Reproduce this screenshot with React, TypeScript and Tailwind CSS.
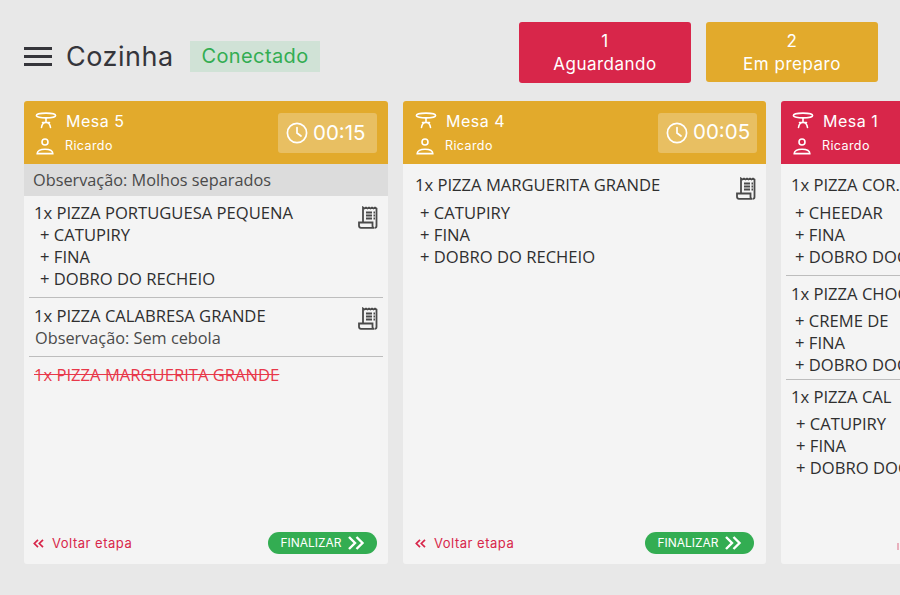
import type { ReactNode } from 'react';

const headFont = "font-['Inter','Noto_Sans',sans-serif]";

function TableIcon() {
  return (
    <svg width="22" height="18" viewBox="0 0 22 18" fill="none" stroke="white" strokeWidth="1.6" strokeLinecap="round">
      <ellipse cx="11" cy="3.5" rx="9.6" ry="2.4" />
      <path d="M11 6v4.5M11 10.5c-2.5 0-4 1-4.5 5M11 10.5c2.5 0 4 1 4.5 5M7.5 10.5h7" />
    </svg>
  );
}

function WaiterIcon() {
  return (
    <svg width="18" height="17" viewBox="0 0 18 17" fill="none" stroke="white" strokeWidth="1.6">
      <circle cx="9" cy="4" r="3" />
      <path d="M1.2 15.6h15.6c0-2.8-3-4.4-7.8-4.4s-7.8 1.6-7.8 4.4z" />
    </svg>
  );
}

function ClockIcon() {
  return (
    <svg width="22" height="22" viewBox="0 0 22 22" fill="none" stroke="white" strokeWidth="1.7" strokeLinecap="round">
      <circle cx="11" cy="11" r="9.6" />
      <path d="M11 5.5V11l4 3" />
    </svg>
  );
}

function ReceiptIcon() {
  return (
    <svg width="21" height="23" viewBox="0 0 21 23" fill="none" stroke="#4a4a4a" strokeWidth="1.8">
      <path d="M5 16V1.5l1.5 1 1.5-1 1.5 1 1.5-1 1.5 1 1.5-1 1.5 1 1.5-1 1.5 1V20c0 1-.8 1.8-1.8 1.8" />
      <path d="M1 16.5h13.5V20c0 1 .8 1.8 1.8 1.8H3c-1.2 0-2-.8-2-2z" />
      <path d="M8 6.5h6M8 9.5h6M8 12.5h6M15.5 6.5h1.5M15.5 9.5h1.5M15.5 12.5h1.5" />
    </svg>
  );
}

interface ItemProps {
  title: string;
  extras?: string[];
  note?: string;
  receipt?: string;
  last?: boolean;
  padding?: string;
  indent?: string;
  titleGap?: string;
}

function Item({ title, extras, note, receipt, last, padding = 'pt-[7px] pb-[7px]', indent = 'pl-[6px]', titleGap = '' }: ItemProps) {
  return (
    <div className={`relative mx-[5px] px-[5px] ${padding} ${last ? '' : 'border-b border-[#bdbdbd]'}`}>
      <div className={`text-[16.6px] leading-[22px] font-medium text-[#2f2f2f] whitespace-nowrap ${titleGap}`}>{title}</div>
      {extras?.map((e) => (
        <div key={e} className={`${indent} text-[16.6px] leading-[22px] font-medium text-[#2f2f2f] whitespace-nowrap`}>+ {e}</div>
      ))}
      {note && <div className="pl-[1px] text-[16.3px] leading-[22px] text-[#4a4a4a]">{note}</div>}
      {receipt && <div className={`absolute ${receipt}`}><ReceiptIcon /></div>}
    </div>
  );
}

interface CardProps {
  mesa: string;
  time?: string;
  color: string;
  obs?: string;
  children: ReactNode;
  footer?: ReactNode;
  width?: string;
  headPadding?: string;
}

function Card({ mesa, time, color, obs, children, footer, width = 'w-[364px]', headPadding = 'pl-[11px] pr-[11px] pt-[1px]' }: CardProps) {
  return (
    <div className={`${width} shrink-0 h-[463px] flex flex-col rounded-[3px] overflow-hidden bg-[#f4f4f4]`}>
      <div className={`${color} h-[63px] shrink-0 flex items-center justify-between ${headPadding}`}>
        <div className={`flex flex-col text-white ${headFont}`}>
          <div className="flex items-center gap-[9px] h-[26px]">
            <TableIcon />
            <span className="text-[16px] tracking-[0.5px]">{mesa}</span>
          </div>
          <div className="flex items-center gap-[11px] h-[24px] pt-[1px]">
            <div className="pl-[1px]"><WaiterIcon /></div>
            <span className="text-[12.5px] tracking-[0.4px]">Ricardo</span>
          </div>
        </div>
        {time && (
          <div className="w-[99px] h-[40px] rounded-[3px] bg-[#e8bf62] flex items-center gap-[5px] pl-[8px]">
            <ClockIcon />
            <span className={`text-white text-[20.5px] ${headFont}`}>{time}</span>
          </div>
        )}
      </div>
      {obs && <div className="h-[32px] shrink-0 bg-[#dcdcdc] pl-[9px] text-[16.3px] leading-[32px] text-[#4a4a4a]">{obs}</div>}
      <div className="flex-1 overflow-hidden">{children}</div>
      {footer}
    </div>
  );
}

function Footer({ padding }: { padding: string }) {
  return (
    <div className={`h-[50px] shrink-0 flex items-start justify-between pt-[18px] ${padding} ${headFont}`}>
      <div className="flex items-center gap-[8px] text-[#d8264a] text-[13px] tracking-[0.5px] leading-[22px] h-[22px]">
        <svg width="11" height="9" viewBox="0 0 11 9" fill="none" stroke="#d8264a" strokeWidth="1.7"><path d="M5 .8 1.3 4.5 5 8.2M10 .8 6.3 4.5 10 8.2" /></svg>
        Voltar etapa
      </div>
      <div className="w-[109px] h-[22px] rounded-full bg-[#33ad52] flex items-center justify-center gap-[5px] text-white text-[12px]">
        FINALIZAR
        <svg width="18" height="14" viewBox="0 0 18 14" fill="none" stroke="white" strokeWidth="2.4"><path d="M2 1l6 6-6 6M9.5 1l6 6-6 6" /></svg>
      </div>
    </div>
  );
}

export default function App() {
  return (
    <div className="w-[900px] h-[595px] overflow-hidden bg-[#e8e8e8] font-['Open_Sans',sans-serif]">
      <div className="h-[101px] flex items-start justify-between pl-[24px] pr-[22px]">
        <div className="flex items-center h-[31px] mt-[41px]">
          <div className="w-[28px] flex flex-col gap-[5px]">
            <span className="block h-[3px] bg-[#35353b]" />
            <span className="block h-[3px] bg-[#35353b]" />
            <span className="block h-[3px] bg-[#35353b]" />
          </div>
          <span className={`ml-[14px] w-[110px] pt-[1px] text-[27px] tracking-[0.5px] text-[#35353b] ${headFont}`}>Cozinha</span>
          <span className={`ml-[14px] w-[130px] h-[31px] bg-[#d0e2d6] text-[#33ad52] text-[20px] tracking-[0.4px] leading-[31px] text-center ${headFont}`}>Conectado</span>
        </div>
        <div className={`mt-[22px] flex gap-[15px] text-white text-center text-[17px] tracking-[0.5px] leading-[23px] ${headFont}`}>
          <div className="w-[172px] h-[61px] rounded-[3px] bg-[#d8264a] pt-[8px]"><div>1</div><div>Aguardando</div></div>
          <div className="w-[172px] h-[60px] rounded-[3px] bg-[#e2aa2c] pt-[8px]"><div>2</div><div>Em preparo</div></div>
        </div>
      </div>
      <div className="flex gap-[15px] pl-[24px]">
        <Card mesa="Mesa 5" time="00:15" color="bg-[#e2aa2c]" obs="Observação: Molhos separados" footer={<Footer padding="pl-[9px] pr-[11px]" />}>
          <Item title="1x PIZZA PORTUGUESA PEQUENA" extras={['CATUPIRY', 'FINA', 'DOBRO DO RECHEIO']} receipt="right-[4px] top-[10px]" padding="pt-[6px] pb-[7px]" />
          <Item title="1x PIZZA CALABRESA GRANDE" note="Observação: Sem cebola" receipt="right-[4px] top-[9px]" />
          <div className="mx-[5px] px-[5px] pt-[6px]">
            <span className="text-[16.6px] leading-[22px] font-medium text-[#e8384a] line-through">1x PIZZA MARGUERITA GRANDE</span>
          </div>
        </Card>
        <Card mesa="Mesa 4" time="00:05" color="bg-[#e2aa2c]" width="w-[363px]" headPadding="pl-[12px] pr-[9px]" footer={<Footer padding="pl-[12px] pr-[12px]" />}>
          <Item title="1x PIZZA MARGUERITA GRANDE" extras={['CATUPIRY', 'FINA', 'DOBRO DO RECHEIO']} receipt="right-[4px] top-[13px]" padding="pt-[10px] pb-[7px] pl-[7px]" indent="pl-[5px]" titleGap="mb-[6px]" last />
        </Card>
        <Card mesa="Mesa 1" color="bg-[#d8264a]" footer={<div className="h-[50px] shrink-0 pt-[29px] pl-[116px]"><div className="w-[2px] h-[7px] bg-[#e8b0bd]" /></div>}>
          <Item title="1x PIZZA COR." extras={['CHEEDAR', 'FINA', 'DOBRO DOCE']} padding="pt-[10px] pb-[7px]" indent="pl-[4px]" titleGap="mb-[6px]" />
          <Item title="1x PIZZA CHOCOLATE" extras={['CREME DE', 'FINA', 'DOBRO DOCE']} padding="pt-[7px] pb-[3px]" indent="pl-[4px]" titleGap="mb-[5px]" />
          <Item title="1x PIZZA CAL" extras={['CATUPIRY', 'FINA', 'DOBRO DOCE']} padding="pt-[6px]" indent="pl-[5px]" titleGap="mb-[5px]" last />
        </Card>
      </div>
    </div>
  );
}
